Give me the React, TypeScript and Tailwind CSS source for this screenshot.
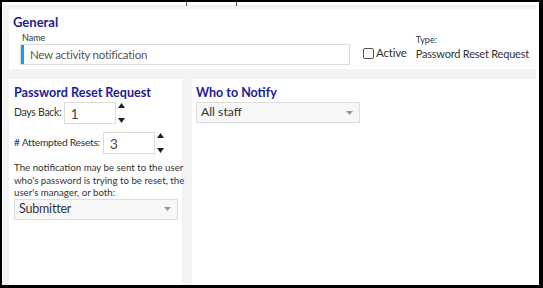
import React from "react";

const Spinner = () => (
  <div className="flex flex-col justify-between h-[22px] ml-[2px] py-[1px]">
    <svg width="7" height="5" viewBox="0 0 7 5"><path d="M3.5 0 L7 5 L0 5 Z" fill="#222" /></svg>
    <svg width="7" height="5" viewBox="0 0 7 5"><path d="M0 0 L7 0 L3.5 5 Z" fill="#222" /></svg>
  </div>
);

const Caret = () => (
  <svg width="7" height="4" viewBox="0 0 7 4"><path d="M0 0 L7 0 L3.5 4 Z" fill="#999" /></svg>
);

export default function App() {
  return (
    <div
      className="w-[543px] h-[288px] bg-white border-t-2 border-l-2 border-r-4 border-b-[3px] border-black box-border flex flex-col relative"
      style={{ fontFamily: 'Lato, "Noto Sans", sans-serif' }}
    >
      <div className="absolute left-[184px] top-0 w-px h-[4px] bg-[#555]" />
      <div className="absolute left-[234px] top-0 w-px h-[4px] bg-[#555]" />
      <div className="mt-[3px] ml-px mr-[3px] flex-1 bg-[#f3f3f3] pt-[4px] pl-[6px] flex flex-col gap-[10px]">
        {/* General */}
        <div className="bg-white h-[60px] pl-[4px] pt-[5px] flex flex-col">
          <div className="text-[13px] font-bold text-[#1c1c94] leading-[17px]">General</div>
          <div className="flex items-end ml-[7px] whitespace-nowrap">
            <div className="flex flex-col">
              <div className="text-[9px] leading-[13px] text-[#333] ml-[2px]">Name</div>
              <div className="w-[330px] h-[21px] border border-[#ddd] flex items-center">
                <div className="w-[3px] h-[19px] bg-[#2196f3]" />
                <span className="text-[11.5px] tracking-[-0.25px] text-[#555] ml-[6px]">New activity notification</span>
              </div>
            </div>
            <div className="flex items-center ml-[13px] mb-[5px]">
              <div className="w-[11px] h-[11px] border border-[#555] rounded-[2px] bg-white" />
              <span className="text-[11.5px] tracking-[-0.2px] text-[#333] ml-[2px] leading-[14px]">Active</span>
            </div>
            <div className="flex flex-col ml-[9px] mb-[4px]">
              <div className="text-[9px] leading-[12px] text-[#333]">Type:</div>
              <div className="text-[11px] tracking-[-0.2px] leading-[15px] text-[#333]">Password Reset Request</div>
            </div>
          </div>
        </div>
        {/* Lower */}
        <div className="flex flex-1 gap-[10px]">
          <div className="w-[173px] bg-white pl-[5px] pt-[5px] flex flex-col whitespace-nowrap">
            <div className="text-[12.6px] font-bold text-[#1c1c94] leading-[17px]">Password Reset Request</div>
            <div className="flex items-center mt-[1px]">
              <span className="text-[10.5px] tracking-[-0.3px] text-[#333]">Days Back:</span>
              <div className="ml-[3px] w-[52px] h-[22px] border border-[#ddd] flex items-center">
                <span className="text-[14px] text-[#4a4a4a] ml-[5px]">1</span>
              </div>
              <Spinner />
            </div>
            <div className="flex items-center mt-[8px]">
              <span className="text-[10.3px] tracking-[-0.3px] text-[#333]"># Attempted Resets:</span>
              <div className="ml-[3px] w-[52px] h-[22px] border border-[#ddd] flex items-center">
                <span className="text-[14px] text-[#4a4a4a] ml-[6px]">3</span>
              </div>
              <Spinner />
            </div>
            <div className="text-[9.7px] leading-[12.5px] text-[#333] mt-[7px] flex flex-col">
              <span>The notification may be sent to the user</span>
              <span>who's password is trying to be reset, the</span>
              <span>user's manager, or both:</span>
            </div>
            <div className="mt-0 w-[164px] h-[21px] bg-[#f7f7f7] border border-[#ddd] flex items-center justify-between pl-[4px] pr-[6px]">
              <span className="text-[12.5px] tracking-[-0.2px] text-[#333]">Submitter</span>
              <Caret />
            </div>
          </div>
          <div className="flex-1 bg-white pl-[4px] pt-[5px] flex flex-col">
            <div className="text-[12.5px] font-bold text-[#1c1c94] leading-[17px]">Who to Notify</div>
            <div className="mt-[1px] w-[164px] h-[21px] bg-[#f7f7f7] border border-[#ddd] flex items-center justify-between pl-[4px] pr-[6px]">
              <span className="text-[12.2px] text-[#333]">All staff</span>
              <Caret />
            </div>
          </div>
        </div>
      </div>
    </div>
  );
}
